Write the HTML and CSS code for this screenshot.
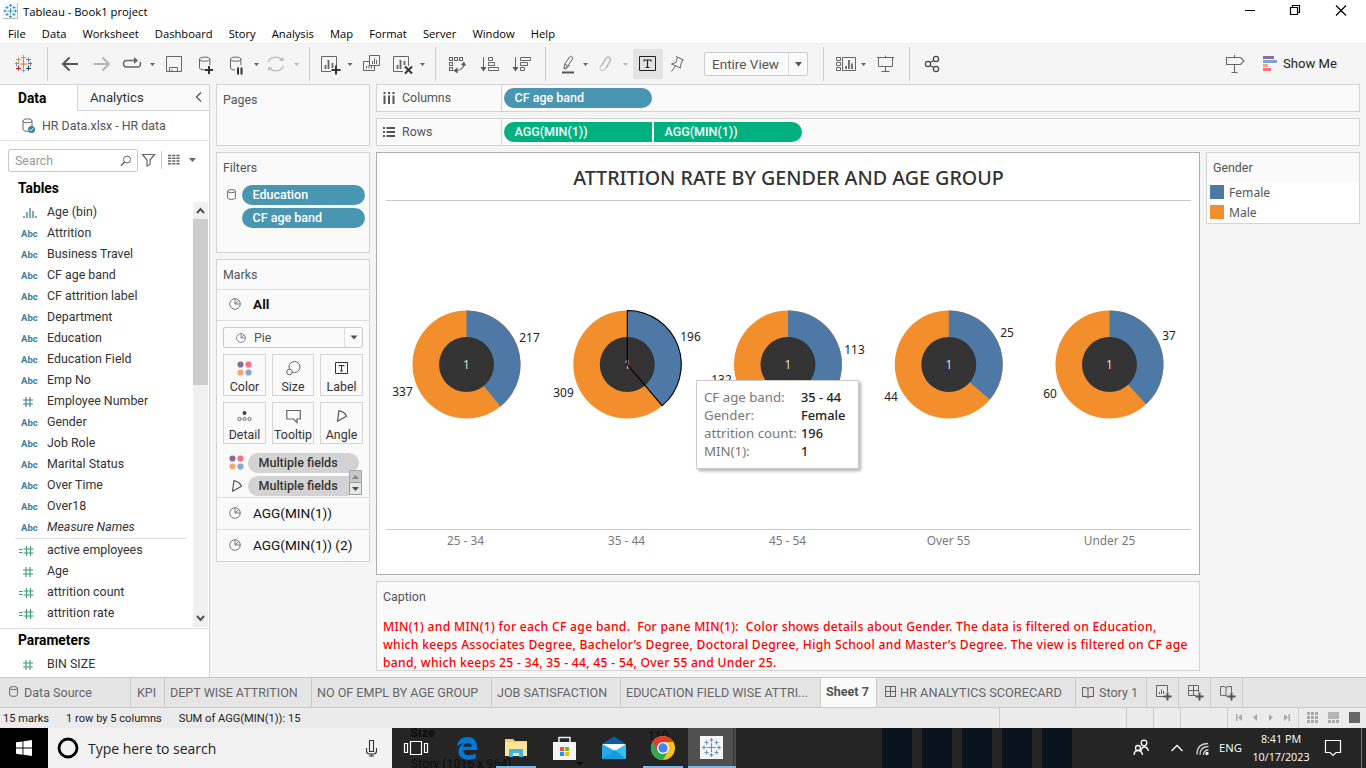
FILE: index.html
```
<!DOCTYPE html>
<html lang="en">
<head>
<meta charset="utf-8">
<title>Tableau - Book1 project</title>
<link rel="stylesheet" href="styles.css">
</head>
<body>
<svg class="defs" width="0" height="0">
  <defs>
    <symbol id="pie" viewBox="0 0 12 12"><circle cx="6" cy="6" r="5.3" fill="none" stroke="#777"/><path d="M6 .8V6L9.8 2.4M6 6h5.2" fill="none" stroke="#777"/></symbol>
    <symbol id="hash" viewBox="0 0 10 10"><path d="M3 0v10M7 0v10M0 3h10M0 7h10" fill="none" stroke="currentColor" stroke-width="1.1"/></symbol>
    <symbol id="calc" viewBox="0 0 15 10"><path d="M7.500 0v10M11.500 0v10M4.500 3h10M4.500 7h10M0 3.500h3.500M0 6.500h3.500" fill="none" stroke="currentColor" stroke-width="1.1"/></symbol>
    <symbol id="dots" viewBox="0 0 15 15"><circle cx="3.500" cy="3.500" r="3.100" fill="#876d99"/><circle cx="11.500" cy="3.500" r="3.100" fill="#fa7183"/><circle cx="3.500" cy="11.500" r="3.100" fill="#f3a776"/><circle cx="11.500" cy="11.500" r="3.100" fill="#86a7cf"/></symbol>
    <symbol id="angle" viewBox="0 0 12 12"><path d="M1.500 11.200 3 .7q6 1.300 7.500 5.600z" fill="none" stroke="#555" stroke-width="1.200" stroke-linejoin="round"/></symbol>
    <symbol id="cyl" viewBox="0 0 9 11"><path d="M.6 2.200v6.600q0 1.600 3.900 1.600t3.900-1.600V2.200Q8.400.6 4.500.6T.6 2.200Q.6 3.600 4.500 3.600T8.400 2.200" fill="none" stroke="#666"/></symbol>
    <symbol id="grid" viewBox="0 0 11 11"><path d="M.5.5h10v10H.5zM5.500.5v10M.5 5.500h10" fill="none" stroke="#666" stroke-width="1.100"/></symbol>
    <symbol id="book" viewBox="0 0 12 12"><path d="M.6 1.500h2.500Q5.500 1.500 6 2.800q.5-1.300 2.900-1.300h2.500v9h-3L6 11.400l-2.400-.9h-3zM6 2.800v8.500" fill="none" stroke="#666" stroke-width="1.100"/></symbol>
  </defs>
</svg>

<header class="titlebar">
  <svg class="app-icon" width="15" height="16" viewBox="0 0 15 16"><path d="M0 0h15v16H0z" fill="#f3f8fb"/><path d="M14.500 0v15.500H0" fill="none" stroke="#bbb"/><path d="M7.500 5v6M4.500 8h6M7.500 1v3M6 2.500h3M7.500 12v3M6 13.500h3M2 6.500v3M.5 8h3M12.500 6.500v3M11 8h3M4 3v3M2.500 4.500h3M11 3v3M9.500 4.500h3M4 10v3M2.500 11.500h3M11 10v3M9.500 11.500h3" stroke="#3d8cc0" stroke-width=".9"/></svg>
  <span class="window-name">Tableau - Book1 project</span>
  <svg width="116" height="22" viewBox="1240 0 116 22" fill="none" stroke="#000" stroke-width="1.200"><path d="M1245 10.500h10M1290.500 7.500h7v7h-7zM1292.500 7.500v-2h7v7h-2M1336 5.500l10 10M1346 5.500l-10 10"/></svg>
</header>
<nav class="menu"><span>File</span><span>Data</span><span>Worksheet</span><span>Dashboard</span><span>Story</span><span>Analysis</span><span>Map</span><span>Format</span><span>Server</span><span>Window</span><span>Help</span></nav>

<div class="toolbar">
  <svg width="56" height="41" viewBox="0 43 56 41"><path d="M23.500 60v8M19.500 64h8" stroke="#e8762c" stroke-width="1.200"/><path d="M23.500 55v5M21 57.500h5" stroke="#7aa6b8"/><path d="M23.500 68.500v4M21.500 70.500h4" stroke="#8a9bc0"/><path d="M15 63.500h4M16.500 62v4" stroke="#6f9ac0"/><path d="M28 63.500h4M30.500 62v4" stroke="#7d6fae"/><path d="M18.500 57.500v5M16 59.500h5" stroke="#eb912c"/><path d="M28.500 57.500v5M26 59.500h5" stroke="#59879b"/><path d="M18.500 65.500v5M16 68.500h5" stroke="#c72035" stroke-width="1.200"/><path d="M28.500 65.500v5M26 68.500h5" stroke="#1f457e" stroke-width="1.200"/><path d="M47.500 47v34" stroke="#ccc"/></svg>
  <svg width="30" height="41" viewBox="56 43 30 41"><path d="M78 64H63M69.500 57.500 63 64l6.500 6.500" class="arrow"/></svg>
  <svg width="32" height="41" viewBox="86 43 32 41"><path d="M94 64h15M102.500 57.500 109 64l-6.500 6.500" class="arrow faint"/></svg>
  <svg width="42" height="41" viewBox="118 43 42 41"><path d="M135 60.500h-8q-3.500 0-3.500 3.200t3.500 3.300h10q3.500 0 3.500-3.300 0-1-.6-1.700" class="ic" stroke-width="1.500"/><path d="M134 57l4 3.500-4 3.500z" fill="#666"/><path d="M150 63h5l-2.500 3z" fill="#666"/></svg>
  <svg width="30" height="41" viewBox="160 43 30 41"><path d="M166.500 56.500h15v15h-15zM169.500 71.500v-4h8v4M172 71.500v-2" class="ic"/></svg>
  <svg width="34" height="41" viewBox="190 43 34 41"><path d="M205 70q-5.500 0-5.500-2V59q0-2 5.200-2t5.200 2v6M199.500 59q0 2.200 5.200 2.200t5.200-2.200" class="ic"/><path d="M209 66v8M205 70h8" stroke="#333" stroke-width="2"/></svg>
  <svg width="40" height="41" viewBox="224 43 40 41"><path d="M235 70q-4.500 0-4.500-2V59q0-2 5.200-2t5.200 2v6M230.500 59q0 2.200 5.200 2.200t5.200-2.200" class="ic"/><path d="M238 67.500v7M241.500 67.500v7" stroke="#333" stroke-width="2"/><path d="M254 63h5l-2.500 3z" fill="#666"/></svg>
  <svg width="45" height="41" viewBox="264 43 45 41"><path d="M268 62a8 7 0 0 1 14-2M283.500 66a8 7 0 0 1-14 2" fill="none" stroke="#bbb" stroke-width="1.300"/><path d="M279 61h4.500v-4zM272.500 67H268v4z" fill="#bbb"/><path d="M294 63h5l-2.500 3z" fill="#bbb"/></svg>
  <svg width="48" height="41" viewBox="309 43 48 41"><path d="M309.500 47v34" stroke="#ccc"/><path d="M331 71.500h-9.500v-15h15V66" class="ic"/><path d="M325.500 65v4M328.500 60v9M332.500 63v5" class="bars"/><path d="M336 65.500v9M331.500 70h9" stroke="#333" stroke-width="2"/><path d="M347.500 63h5l-2.500 3z" fill="#666"/></svg>
  <svg width="30" height="41" viewBox="357 43 30 41"><path d="M369.500 55.500h10v10h-10zM369.500 61.500h-6v9h11v-5" class="ic"/><path d="M372.500 61v3M374.500 58.500v5.500M376.500 60v4M366.500 66v2.500M369 65v3.500M371.500 66v2.500" stroke="#666" stroke-width="1"/></svg>
  <svg width="48" height="41" viewBox="387 43 48 41"><path d="M403 71.500h-9.500v-15h15V66" class="ic"/><path d="M397.500 65v4M400.500 60v9M404.500 61v4" class="bars"/><path d="M405 66.500l7 7M412 66.500l-7 7" stroke="#333" stroke-width="2"/><path d="M420 63h5l-2.500 3z" fill="#666"/></svg>
  <svg width="39" height="41" viewBox="435 43 39 41"><path d="M435.500 47v34" stroke="#ccc"/><path d="M449.500 57.500h3v3h-3zM454.500 57.500h3v3h-3zM459.500 57.500h3v3h-3zM449.500 62.500h3v3h-3zM449.500 67.500h3v3h-3zM464 64q-.5 6-8 6.500" class="ic" stroke-width="1.100"/><path d="M461 65l3-3.500 2 4.500zM457.500 67.500v6l-4-3z" fill="#555"/></svg>
  <svg width="32" height="41" viewBox="474 43 32 41"><path d="M483.500 57v12M488.500 57.500h4v3h-4zM488.500 62.500h6v3h-6zM488.500 67.500h10v3h-10z" class="ic"/><path d="M480.500 67h6l-3 4.500z" fill="#555"/></svg>
  <svg width="39" height="41" viewBox="506 43 39 41"><path d="M515.500 57v12M520.500 57.500h10v3h-10zM520.500 62.500h7v3h-7zM520.500 67.500h4v3h-4z" class="ic"/><path d="M512.500 67h6l-3 4.500z" fill="#555"/></svg>
  <svg width="48" height="41" viewBox="545 43 48 41"><path d="M545.500 47v34" stroke="#ccc"/><path d="M564 69l.8-5 4.700-7q1-1.300 2.300-.3t.7 2.300l-4.700 7zM564.800 64l3 2M569.500 65l-4 4.500" class="ic"/><path d="M562 72.500h12" stroke="#555" stroke-width="2"/><path d="M583 63h5l-2.500 3z" fill="#666"/></svg>
  <svg width="40" height="41" viewBox="593 43 40 41"><path d="M602 66l4-7q1.300-2 3-1t.7 3l-5 8.500q-1.500 2-3.500.8t-1-3.300l5-8.500q2-3 4.500-1.500t.7 4.500l-4 7" class="ic pale"/><path d="M623 63h5l-2.500 3z" fill="#bbb"/></svg>
  <svg width="30" height="41" viewBox="633 43 30 41"><path d="M633 49h30v30h-30z" fill="#e3e3e3"/><path d="M639.500 56.500h16v14h-16z" fill="none" stroke="#222"/><path d="M644 61.500v-1.500h7v1.500M647.500 60v7.500M645.500 67.500h4" fill="none" stroke="#222" stroke-width="1.200"/></svg>
  <svg width="41" height="41" viewBox="663 43 41 41"><path d="M676 56.500l7.500 3.500M677.500 57l-1.500 5.500-4.500 1.500 9 4 .5-4.500 2-4M675.500 66l-4 5.500" class="ic"/></svg>
  <div class="fit"><span>Entire View</span><svg width="19" height="22"><path d="M6 9h7l-3.500 4.500z" fill="#555"/></svg></div>
  <svg width="62" height="41" viewBox="808 43 62 41"><path d="M823.500 47v34" stroke="#ccc"/><path d="M836.500 57.500h4v3h-4zM836.500 62.500h4v3h-4zM836.500 67.500h4v3h-4zM842.500 57.500h13v13h-13z" class="ic"/><path d="M846 66v3M849 60v9M852 63.500v5.500" class="bars"/><path d="M861 63h5l-2.500 3z" fill="#666"/></svg>
  <svg width="39" height="41" viewBox="870 43 39 41"><path d="M877 57.500h17M878.500 58v8.500h14V58M885.500 55.500v2M885.500 66.500v5M881.500 71.500h8" class="ic"/></svg>
  <svg width="36" height="41" viewBox="909 43 36 41"><path d="M909.500 47v34" stroke="#ccc"/><g class="ic dark"><circle cx="928" cy="64" r="2.600"/><circle cx="936" cy="59" r="2.600"/><circle cx="936" cy="69" r="2.600"/><path d="M930.200 62.500l3.500-2M930.200 65.500l3.500 2"/></g></svg>
  <svg class="push" width="30" height="41" viewBox="1221 43 30 41"><path d="M1234.500 55v2.500M1226.500 57.500h14l3.500 3.500-3.500 3.500h-14zM1234.500 64.500v8M1231.500 72.500h6" class="ic" stroke-width="1.100"/></svg>
  <svg width="32" height="41" viewBox="1251 43 32 41"><path d="M1263 56h11v3h-11z" fill="#8a6f9e"/><path d="M1263 60h14v3h-14z" fill="#7fa3cf"/><path d="M1263 64h5v3h-5z" fill="#f3a776"/><path d="M1263 68h8v3h-8z" fill="#fa6e80"/></svg>
  <span class="show-me">Show Me</span>
</div>

<main class="workspace">
  <aside class="data-pane">
    <div class="pane-tabs"><b>Data</b><span>Analytics</span><svg width="20" height="26"><path d="M12 7.500 7.500 12 12 16.500" fill="none" stroke="#555" stroke-width="1.300"/></svg></div>
    <div class="source"><svg width="15" height="16" fill="none"><path d="M6 13.500q-5-.2-5-2.300V2.800Q1 .8 5.500.8T10 2.800V8M1 2.800q0 2 4.500 2t4.500-2" stroke="#666"/><circle cx="9.500" cy="11.500" r="3.600" fill="#3b82a4"/><path d="M7.700 11.500l1.300 1.300 2.300-2.600" stroke="#fff"/></svg>HR Data.xlsx - HR data</div>
    <div class="search-row">
      <div class="search">Search<svg width="12" height="12"><circle cx="7" cy="4.500" r="3.500" class="ic"/><path d="M4.500 7 1 10.800" class="ic" stroke-width="1.500"/></svg></div>
      <svg width="70" height="24" viewBox="138 148 70 24"><path d="M142.500 154.500h12l-4.500 5.500v4.500l-3 1.500v-6z" class="ic" stroke-width="1.200"/><path d="M161.500 151v18" stroke="#ccc"/><path d="M168 155.500h12M168 158.300h12M168 161h12M168 163.700h12" stroke="#666" stroke-width="1.500" stroke-dasharray="3.200 1"/><path d="M189 158h7l-3.500 4z" fill="#666"/></svg>
    </div>
    <h3>Tables</h3>
    <div class="field-area">
      <div class="fields">
        <p><i><svg width="14" height="10"><path d="M1 8v2M4 4v6M7 0v10M10 3v7M13 8v2" stroke="#3c7d9c" stroke-width="1.300"/></svg></i>Age (bin)</p>
        <p><i>Abc</i>Attrition</p>
        <p><i>Abc</i>Business Travel</p>
        <p><i>Abc</i>CF age band</p>
        <p><i>Abc</i>CF attrition label</p>
        <p><i>Abc</i>Department</p>
        <p><i>Abc</i>Education</p>
        <p><i>Abc</i>Education Field</p>
        <p><i>Abc</i>Emp No</p>
        <p><i><svg width="10" height="10"><use href="#hash"/></svg></i>Employee Number</p>
        <p><i>Abc</i>Gender</p>
        <p><i>Abc</i>Job Role</p>
        <p><i>Abc</i>Marital Status</p>
        <p><i>Abc</i>Over Time</p>
        <p><i>Abc</i>Over18</p>
        <p><i>Abc</i><em>Measure Names</em></p>
        <hr>
        <p class="measure"><i class="wide"><svg width="15" height="10"><use href="#calc"/></svg></i>active employees</p>
        <p class="measure"><i><svg width="10" height="10"><use href="#hash"/></svg></i>Age</p>
        <p class="measure"><i class="wide"><svg width="15" height="10"><use href="#calc"/></svg></i>attrition count</p>
        <p class="measure"><i class="wide"><svg width="15" height="10"><use href="#calc"/></svg></i>attrition rate</p>
      </div>
      <div class="scrollbar">
        <svg width="15" height="17"><path d="M4 11l3.500-4 3.500 4" fill="none" stroke="#505050" stroke-width="2"/></svg>
        <div class="thumb"></div>
        <svg class="down" width="15" height="17"><path d="M4 6l3.500 4L11 6" fill="none" stroke="#505050" stroke-width="2"/></svg>
      </div>
    </div>
    <div class="parameters"><h3>Parameters</h3><p class="measure"><i><svg width="10" height="10"><use href="#hash"/></svg></i>BIN SIZE</p></div>
  </aside>

  <section class="cards">
    <div class="card pages"><h4>Pages</h4></div>
    <div class="card filters"><h4>Filters</h4>
      <div class="filter"><svg width="9" height="11"><use href="#cyl"/></svg><span class="pill">Education</span></div>
      <div class="filter"><svg width="9" height="11"></svg><span class="pill">CF age band</span></div>
    </div>
    <div class="card marks"><h4>Marks</h4>
      <div class="mark-row all"><svg width="12" height="12"><use href="#pie"/></svg>All</div>
      <div class="mark-type"><svg width="10" height="10"><use href="#pie"/></svg><span>Pie</span><svg class="open" width="18" height="19"><path d="M5.500 7.500h7l-3.500 4z" fill="#555"/></svg></div>
      <div class="mark-buttons">
        <div><svg width="15" height="15"><use href="#dots"/></svg>Color</div>
        <div><svg width="15" height="15"><circle cx="8.500" cy="6" r="5.500" class="ic"/><circle cx="3.500" cy="11" r="2.800" fill="#fafafa" stroke="#666"/></svg>Size</div>
        <div><svg width="15" height="15"><path d="M1.500 1.500h12v11h-12z" fill="none" stroke="#333"/><path d="M5 5.500v-1h5v1M7.500 4.500v5.500M6 10h3" fill="none" stroke="#333"/></svg>Label</div>
        <div><svg width="15" height="15"><circle cx="7.500" cy="4" r="2" fill="#444"/><circle cx="2.500" cy="10" r="1.600" class="ic"/><circle cx="7.500" cy="10" r="1.600" class="ic"/><circle cx="12.500" cy="10" r="1.600" class="ic"/></svg>Detail</div>
        <div><svg width="15" height="15"><path d="M.8 1.500h13.500v8.500h-3.300v3.500L7.500 10H.8z" class="ic" stroke-width="1.200"/></svg>Tooltip</div>
        <div><svg width="12" height="15" viewBox="0 -1 12 15"><use href="#angle" width="12" height="12"/></svg>Angle</div>
      </div>
      <div class="encodings">
        <div class="encoding"><svg width="15" height="15"><use href="#dots"/></svg><span class="pill grey">Multiple fields</span></div>
        <div class="encoding"><svg width="12" height="12"><use href="#angle"/></svg><span class="pill grey cut">Multiple fields</span></div>
        <svg class="spin" width="13" height="25"><path d="M.5.5h12v12H.5z" fill="#c8c8c8" stroke="#aaa"/><path d="M.5 12.500h12v12H.5z" fill="#e8e8e8" stroke="#999"/><path d="M3 9h7L6.500 5z" fill="#888"/><path d="M3 17h7l-3.500 4z" fill="#3f4f74"/></svg>
      </div>
      <div class="mark-row"><svg width="12" height="12"><use href="#pie"/></svg>AGG(MIN(1))</div>
      <div class="mark-row"><svg width="12" height="12"><use href="#pie"/></svg>AGG(MIN(1)) (2)</div>
    </div>
  </section>

  <section class="sheet">
    <div class="shelf"><div class="shelf-name"><svg width="12" height="13"><path d="M1.500 0v2M1.500 3.500V12M6 0v2M6 3.500V12M10.500 0v2M10.500 3.500V12" stroke="#555" stroke-width="2"/></svg>Columns</div><span class="pill wide-pill">CF age band</span></div>
    <div class="shelf"><div class="shelf-name"><svg width="12" height="13"><path d="M0 2h2M3.500 2H12M0 6h2M3.500 6H12M0 10h2M3.500 10H12" stroke="#555" stroke-width="2"/></svg>Rows</div><span class="pill wide-pill green first">AGG(MIN(1))</span><span class="pill wide-pill green last">AGG(MIN(1))</span></div>
    <div class="canvas-row">
      <div class="canvas-col">
        <div class="viz">
          <h1>ATTRITION RATE BY GENDER AND AGE GROUP</h1>
          <svg class="donuts" width="805" height="329" viewBox="386 201 805 329">
            <g transform="translate(466.500 364.500)"><circle r="54" fill="#f28e2b"/><path d="M0 0V-54A54 54 0 0 1 34 42z" fill="#4e79a7"/><circle r="27.500" fill="#333"/><text class="core" y="4.500">1</text></g>
            <g transform="translate(627.300 364.500)"><circle r="54" fill="#f28e2b"/><path d="M0 0V-54A54 54 0 0 1 34.900 41.200z" fill="#4e79a7"/><circle r="27.500" fill="#333"/><text class="core" y="4.500">1</text><path d="M0 0V-54A54 54 0 0 1 34.900 41.200z" fill="none" stroke="#000" stroke-width="1.100"/></g>
            <g transform="translate(788 364.500)"><circle r="54" fill="#f28e2b"/><path d="M0 0V-54A54 54 0 0 1 13 52.400z" fill="#4e79a7"/><circle r="27.500" fill="#333"/><text class="core" y="4.500">1</text></g>
            <g transform="translate(948.800 364.500)"><circle r="54" fill="#f28e2b"/><path d="M0 0V-54A54 54 0 0 1 41.100 35z" fill="#4e79a7"/><circle r="27.500" fill="#333"/><text class="core" y="4.500">1</text></g>
            <g transform="translate(1109.500 364.500)"><circle r="54" fill="#f28e2b"/><path d="M0 0V-54A54 54 0 0 1 36.600 39.700z" fill="#4e79a7"/><circle r="27.500" fill="#333"/><text class="core" y="4.500">1</text></g>
            <g class="counts"><text x="529.500" y="342">217</text><text x="402.500" y="396">337</text><text x="690.500" y="341">196</text><text x="563.500" y="397">309</text><text x="854.500" y="354">113</text><text x="721.500" y="384">132</text><text x="1007" y="337">25</text><text x="891" y="401">44</text><text x="1169" y="340">37</text><text x="1050" y="398">60</text></g>
          </svg>
          <div class="axis"><span>25 - 34</span><span>35 - 44</span><span>45 - 54</span><span>Over 55</span><span>Under 25</span></div>
          <div class="tooltip"><span>CF age band:</span><b>35 - 44</b><span>Gender:</span><b>Female</b><span>attrition count:</span><b>196</b><span>MIN(1):</span><b>1</b></div>
        </div>
        <div class="caption"><h4>Caption</h4><p>MIN(1) and MIN(1) for each CF age band.&nbsp; For pane MIN(1):&nbsp; Color shows details about Gender. The data is filtered on Education,<br>which keeps Associates Degree, Bachelor’s Degree, Doctoral Degree, High School and Master’s Degree. The view is filtered on CF age<br>band, which keeps 25 - 34, 35 - 44, 45 - 54, Over 55 and Under 25.</p></div>
      </div>
      <div class="legend"><h4>Gender</h4><ul><li class="female">Female</li><li class="male">Male</li></ul></div>
    </div>
  </section>
</main>

<div class="tabs">
  <div class="t1"><svg width="9" height="11"><use href="#cyl"/></svg>Data Source</div>
  <div class="t2">KPI</div><div class="t3">DEPT WISE ATTRITION</div><div class="t4">NO OF EMPL BY AGE GROUP</div><div class="t5">JOB SATISFACTION</div><div class="t6">EDUCATION FIELD WISE ATTRI...</div><div class="t7">Sheet 7</div>
  <div class="t8"><svg width="11" height="11"><use href="#grid"/></svg>HR ANALYTICS SCORECARD</div>
  <div class="t9"><svg width="12" height="12"><use href="#book"/></svg>Story 1</div>
  <div class="new"><svg width="16" height="16"><path d="M8 11.500H.5v-11h11V7" class="ic"/><path d="M3.500 7v2M5.500 4.500V9M7.500 6v3" stroke="#666"/><path d="M11.500 7.500v8M7.500 11.500h8" class="plus"/></svg></div>
  <div class="new"><svg width="16" height="16"><path d="M8 10.500H.5V.5h10V7M5.500.5v10M.5 5.500h10" class="ic"/><path d="M11.500 7.500v8M7.500 11.500h8" class="plus"/></svg></div>
  <div class="new"><svg width="16" height="16"><path d="M7 11.500l-1-.6-2-.5H.5V1.500H3q2.500 0 3 1.300.5-1.300 3-1.300h2.500V7M6 2.800V11" class="ic"/><path d="M11.500 7.500v8M7.500 11.500h8" class="plus"/></svg></div>
</div>
<div class="status">
  <span>15 marks</span><span>1 row by 5 columns</span><span>SUM of AGG(MIN(1)): 15</span>
  <svg width="367" height="20" viewBox="999 708 367 20"><path d="M999.500 708v20M1126.500 708v20M1153.500 708v20M1180.500 708v20M1227.500 708v20M1298.500 708v20" stroke="#ccc"/><path d="M1236 714h1.500v7h-1.500zM1242 714v7l-4-3.500zM1257 714v7l-4-3.500zM1269 714v7l4-3.500zM1284 714v7l4-3.500zM1288.500 714h1.500v7h-1.500z" fill="#aaa"/><path d="M1307 713.500h11M1307 717.500h11M1307 721.500h11" stroke="#aaa" stroke-width="3" stroke-dasharray="3 1"/><path d="M1328 712h11v7h-11z" fill="#b5b5b5"/><path d="M1328 721.500h11" stroke="#aaa" stroke-width="3" stroke-dasharray="3 1"/><path d="M1349 712h11v11h-11z" fill="#666"/></svg>
</div>

<footer class="taskbar">
  <div class="start"><svg width="16" height="16"><path d="M0 2.300 6.500 1.400V7.600H0zM7.400 1.200 16 0v7.600H7.400zM0 8.500h6.500v6.200L0 13.800zM7.400 8.500H16V16l-8.600-1.200z" fill="#fff"/></svg></div>
  <div class="cortana"><svg width="22" height="22"><circle cx="11" cy="11" r="9" fill="none" stroke="#000" stroke-width="2.800"/></svg><span>Type here to search</span><svg width="11" height="17"><path d="M3.500.5h4v11h-4zM.5 8v3q0 3 3 3h4q3 0 3-3V8M5.500 14v2.500M3 16h5" fill="none" stroke="#333" stroke-width="1.100"/></svg></div>
  <svg class="apps" width="344" height="40" viewBox="392 728 344 40">
    <g class="ghost"><text x="410" y="737" font-size="13" font-weight="700">Size</text><text x="411" y="768" font-size="12.300">Story (1016 x 964)</text><text x="648" y="740" font-size="12">110</text><path d="M576 762h7l-3.500 4z"/></g>
    <path d="M688 728h45v40h-45z" fill="#505050"/><path d="M733.500 728v40" stroke="#333"/><path d="M735 728v40" stroke="#4c4c4c" stroke-width="2"/>
    <path d="M496 766h40v2h-40zM643 766h40v2h-40zM688 766h48v2h-48z" fill="#76b9ed"/>
    <path d="M410.500 741.500h11v13h-11zM407.500 743.500h-3v9h3zM424.500 743.500h3v9h-3z" fill="none" stroke="#fff" stroke-width="1.200"/>
    <path d="M457 746.500C458 740 462 737 467.500 737c6 0 9.500 4 9.500 10v3h-14c.3 4 3 5.300 6.300 5.300 2.500 0 4.700-.6 6.500-1.700v4.300c-2 1.200-4.500 1.800-7.500 1.800-6.300 0-9.800-3.700-9.800-8.700 0-3.500 2-6 5-7.500-2.500.3-5 1.300-6.500 3zM463.200 746.700h8.600c0-2.400-1.400-3.700-4-3.700-2.500 0-4 1.300-4.600 3.700z" fill="#0078d7" fill-rule="evenodd"/>
    <path d="M505 739h8l2 2h12v15h-22z" fill="#f5ce62"/><path d="M505 742h22v14h-22z" fill="#ffe594"/><path d="M509 757v-8h14v8h-4v-4h-6v4z" fill="#42b3e5"/>
    <path d="M559 743v-5.500h11v5.500" fill="none" stroke="#eee" stroke-width="1.500"/><path d="M553 742h23v18h-23z" fill="#f4f4f4"/><path d="M560 747h4v4h-4z" fill="#f25022"/><path d="M565 747h4v4h-4z" fill="#7fba00"/><path d="M560 752h4v4h-4z" fill="#00a4ef"/><path d="M565 752h4v4h-4z" fill="#ffb900"/>
    <path d="M602 744l12-7.500 12 7.500z" fill="#0a5ca8"/><path d="M603 744h22v10h-22z" fill="#fff"/><path d="M602 744l15 8-15 7z" fill="#28a8ea"/><path d="M626 744v15h-24z" fill="#35c0f2"/><path d="M602 759l13-9 11 9z" fill="#159bdc"/>
    <g transform="translate(663 748)"><circle r="12" fill="#fbc116"/><path d="M-10.400-6A12 12 0 0 0 0 12L5.200 3 0 0z" fill="#2da94f"/><path d="M-10.400-6A12 12 0 0 1 10.400-6H0L-5.200 3z" fill="#e33b2e"/><circle r="6" fill="#fff"/><circle r="4.700" fill="#4285f4"/></g>
    <path d="M700 736h23v23h-23z" fill="#f3f5f7"/><path d="M711.500 743v9M707 747.500h9M711.500 738v4M709.500 740h4M711.500 753v4M709.500 755h4M704 745.500v4M702 747.500h4M719 745.500v4M717 747.500h4M706.500 740.500v4M704.500 742.500h4M716.500 740.500v4M714.500 742.500h4M706.500 750.500v4M704.500 752.500h4M716.500 750.500v4M714.500 752.500h4" stroke="#5d94b8" stroke-width="1.100"/>
  </svg>
  <svg class="wallpaper" width="190" height="40" viewBox="882 728 190 40"><path d="M882 728h30v40h-30zM922 728h30v40h-30zM962 728h30v40h-30zM1002 728h30v40h-30zM1042 728h30v40h-30z" fill="#0a121b"/></svg>
  <svg class="tray" width="90" height="40" viewBox="1129 728 90 40" fill="none" stroke="#fff" stroke-width="1.300"><circle cx="1144" cy="743" r="2.800"/><path d="M1141 751q.5-4 3.500-4t4 4"/><circle cx="1138" cy="748" r="2.500"/><path d="M1134 755q.3-4.500 4-4.500t4.500 4.500M1171.500 751l5.500-5.500 5.500 5.500"/><path d="M1197 754.500q0-11 11-11M1200 755q0-8.500 8.500-8.500M1203.500 755q0-5 5-5" stroke="#ccc"/><circle cx="1207" cy="753.500" r="1" fill="#fff"/></svg>
  <span class="lang">ENG</span>
  <div class="clock"><span>8:41 PM</span><span>10/17/2023</span></div>
  <svg class="notify" width="42" height="40" viewBox="1320 728 42 40"><path d="M1325.500 740.500h15v12h-4.500l-3 3-3-3h-4.500z" fill="none" stroke="#fff" stroke-width="1.200"/><path d="M1361.500 728v40" stroke="#777"/></svg>
</footer>
</body>
</html>
```
FILE: styles.css
```
* { box-sizing: border-box; margin: 0; padding: 0; }
body { width: 1366px; height: 768px; overflow: hidden; display: flex; flex-direction: column; background: #f5f5f5; font: 12.400px/16px Roboto, "Liberation Sans", sans-serif; color: #333; white-space: nowrap; }
svg { display: block; flex: none; }
.defs { position: absolute; }
.ic { fill: none; stroke: #666; }
.pale { stroke: #bbb; }
.dark { stroke: #444; stroke-width: 1.200; }
.bars { stroke: #666; stroke-width: 1.800; }
.plus { stroke: #555; stroke-width: 2; }
.arrow { fill: none; stroke: #555; stroke-width: 2; }
.faint { stroke: #b5b5b5; }

.titlebar { height: 22px; background: #fff; display: flex; align-items: center; padding: 0 10px 0 3px; font: 11.300px/22px "Open Sans", sans-serif; color: #000; }
.window-name { margin: 1px 0 0 5px; flex: 1; }
.titlebar svg { align-self: flex-start; }
.titlebar .app-icon { margin-top: 3px; }
.menu { height: 21px; background: #fff; display: flex; gap: 16.100px; padding-left: 8px; font: 11.200px/23px "Open Sans", sans-serif; color: #000; }
.toolbar { height: 41px; box-shadow: inset 0 1px #eee; display: flex; align-items: center; padding-right: 29px; }
.fit { width: 104px; height: 24px; border: 1px solid #ccc; border-radius: 2px; display: flex; line-height: 22px; font-size: 13.500px; color: #555; background: #fafafa; }
.fit span { flex: 1; padding-left: 7px; }
.fit svg { border-left: 1px solid #ddd; }
.push { margin-left: auto; }
.show-me { font-size: 13.100px; color: #222; }

.workspace { height: 593px; display: flex; gap: 6px; padding-right: 6px; }
.data-pane { width: 210px; background: #fff; border-top: 1px solid #d4d4d4; border-right: 1px solid #d4d4d4; }
.pane-tabs { height: 26px; display: flex; font-size: 13.200px; line-height: 26px; }
.pane-tabs b { width: 77px; padding-left: 18px; color: #000; font-size: 13.800px; }
.pane-tabs span { flex: 1; padding-left: 12px; border-left: 1px solid #d4d4d4; border-bottom: 1px solid #d4d4d4; background: #fafafa; }
.pane-tabs svg { border-bottom: 1px solid #d4d4d4; background: #fafafa; }
.source { height: 30px; display: flex; align-items: center; gap: 5px; padding-left: 22px; border-bottom: 1px solid #e3e3e3; color: #555; }
.source svg { margin-top: 1px; }
.search-row { display: flex; padding: 8px 0 0 8px; height: 32px; }
.search { width: 130px; height: 23px; border: 1px solid #c8c8c8; border-radius: 2px; display: flex; align-items: center; justify-content: space-between; padding: 0 5px 0 6px; color: #999; }
.search-row > svg { margin-top: -1px; }
h3 { font-size: 13.800px; line-height: 16px; font-weight: 700; color: #000; padding-left: 18px; }
.data-pane > h3 { margin-top: 7px; }
.field-area { margin-top: 6px; height: 427px; display: flex; justify-content: space-between; border-bottom: 1px solid #ddd; }
.fields { width: 193px; margin-top: -1px; }
.data-pane p { height: 21px; line-height: 21px; padding-left: 16px; display: flex; align-items: center; color: #333; }
.data-pane p i { width: 31px; padding: 2px 0 0 5px; font: 700 9.500px/18px Roboto, sans-serif; color: #3c7d9c; }
.data-pane p i svg { margin-left: 2px; }
.data-pane p i.wide svg { margin-left: -2px; }
.data-pane p.measure i { color: #3a9c72; }
.fields hr { border: 0; border-top: 1px solid #ddd; margin: 1px 7px 0 15px; }
.scrollbar { width: 15px; background: #f0f0f0; display: flex; flex-direction: column; height: 425px; margin-right: 1px; }
.thumb { height: 166px; background: #cdcdcd; }
.down { margin-top: auto; }
.parameters { padding-top: 3px; }
.parameters p { margin-top: 5px; }

.cards { width: 154px; display: flex; flex-direction: column; gap: 6px; }
.card, .shelf { border: 1px solid #d4d4d4; background: #fafafa; }
h4 { font-size: 12.400px; font-weight: 400; color: #555; line-height: 16px; padding: 7px 6px 0; }
.pages { height: 62px; }
.filters { height: 101px; }
.marks { height: 303px; }
.pill { display: block; height: 20px; line-height: 20px; border-radius: 10px; background: #4996b2; color: #fff; font-weight: 500; font-size: 12.500px; padding-left: 10.500px; }
.filter { display: flex; align-items: center; gap: 6px; padding: 0 4px 0 10px; height: 23px; }
.filters h4 { padding-bottom: 7px; }
.filter .pill { flex: 1; }
.marks h4 { height: 29px; }
.mark-row { height: 32px; border-top: 1px solid #ddd; display: flex; align-items: center; gap: 12px; padding: 0 0 2px 12px; color: #111; font-size: 13.600px; }
.mark-row.all { border-bottom: 1px solid #ddd; font-weight: 700; }
.mark-type { margin: 6px 6px 0; height: 21px; border: 1px solid #ccc; border-radius: 2px; display: flex; align-items: center; gap: 8px; padding-left: 12px; color: #555; }
.mark-type span { flex: 1; }
.mark-type .open { border-left: 1px solid #ddd; }
.mark-buttons { display: grid; grid-template-columns: 43px 42px 43px; gap: 6px; padding: 6px 6px 0; }
.mark-buttons div { height: 42px; border: 1px solid #d4d4d4; display: flex; flex-direction: column; align-items: center; padding-top: 6px; gap: 3px; }
.encodings { position: relative; height: 53px; padding-top: 7px; overflow: hidden; }
.encoding { height: 23px; display: flex; align-items: center; padding-left: 12px; gap: 4px; }
.encoding svg[width="12"] { margin: 0 1px 0 2px; }
.grey { background: #d3d3d3; color: #333; width: 111px; }
.cut { width: 101px; border-radius: 10px 0 0 10px; }
.spin { position: absolute; right: 7px; bottom: 2px; }

.sheet { flex: 1; display: flex; flex-direction: column; gap: 6px; }
.shelf { height: 28px; display: flex; align-items: center; }
.shelf-name { width: 125px; height: 26px; display: flex; align-items: center; gap: 7px; padding-left: 6px; border-right: 1px solid #d4d4d4; color: #555; }
.wide-pill { width: 148px; margin-left: 2px; }
.green { background: #00b180; }
.first { border-radius: 10px 0 0 10px; }
.last { border-radius: 0 10px 10px 0; }
.canvas-row { display: flex; gap: 6px; align-items: flex-start; }
.canvas-col { width: 824px; display: flex; flex-direction: column; gap: 6px; }
.viz { position: relative; height: 423px; background: #fff; border: 1px solid #aeaeae; padding: 0 8px 0 9px; font-family: "Noto Sans", sans-serif; }
.viz h1 { height: 48px; border-bottom: 1px solid #c8c8c8; text-align: center; font: 500 19.700px/50px "Noto Sans", sans-serif; color: #333; }
.donuts text { font: 11.900px "Noto Sans", sans-serif; fill: #222; text-anchor: middle; }
.donuts text.core { fill: #ddd; }
.axis { display: grid; grid-template-columns: repeat(5, 1fr); margin-top: -1px; border-top: 1px solid #c8c8c8; text-align: center; font-size: 11.850px; line-height: 21px; color: #787878; }
.axis span { padding-right: 2px; }
.tooltip { position: absolute; left: 319px; top: 227px; width: 163px; height: 89px; background: #fff; border: 1px solid #ccc; box-shadow: 2px 2px 3px rgba(0,0,0,.3); display: grid; grid-template-columns: 97px 1fr; align-content: start; padding: 7px; font-size: 13.250px; line-height: 18px; color: #787878; }
.tooltip b { font-weight: 500; font-size: 12.800px; color: #222; }
.caption { height: 90px; border: 1px solid #d4d4d4; background: #fafafa; }
.caption p { padding: 13px 6px 0; font: 500 12.110px/18px "Noto Sans", sans-serif; letter-spacing: .31px; color: #f00; }
.legend { width: 154px; height: 72px; border: 1px solid #d4d4d4; background: #fff; }
.legend h4 { height: 29px; background: #fafafa; }
.legend ul { list-style: none; padding-top: 1px; font: 12.100px/20px "Noto Sans", sans-serif; color: #555; }
.legend li { height: 20px; display: flex; align-items: center; gap: 5px; padding-left: 3px; }
.legend li::before { content: ""; width: 14px; height: 14px; margin-top: -2px; background: #4e79a7; }
.legend li.male::before { background: #f28e2b; }

.tabs { height: 30px; border-top: 1px solid #c8c8c8; background: #e5e5e5; display: flex; font-size: 12.550px; color: #666; }
.tabs div { display: flex; align-items: center; gap: 4px; border-right: 1px solid #c8c8c8; padding-left: 5px; overflow: hidden; }
.tabs .t1 { width: 131px; padding-left: 9px; gap: 6px; }
.tabs .t2 { width: 34px; padding-left: 6px; }
.t3 { width: 147px; }
.t4 { width: 180px; }
.t5 { width: 129px; }
.t6 { width: 200px; }
.tabs .t7 { width: 56px; background: #fafafa; font-weight: 700; color: #555; padding: 0 0 2px 5px; }
.tabs .t8 { width: 199px; padding-left: 8px; font-size: 12.750px; }
.tabs .t9 { width: 71px; gap: 5px; padding-left: 6px; }
.tabs .t8 svg, .tabs .t9 svg, .tabs .t1 svg { margin-top: -2px; }
.tabs .new { width: 32px; padding: 1px 0 0 9px; }
.status { height: 21px; border-top: 1px solid #ccc; background: #ebebeb; display: flex; gap: 17px; padding-left: 3px; font-size: 11.100px; line-height: 21px; color: #222; }
.status svg { margin-left: auto; }

.taskbar { height: 40px; background: #252525; display: flex; color: #fff; font-family: "Open Sans", sans-serif; }
.start { width: 48px; background: #000; display: flex; align-items: center; justify-content: center; }
.cortana { width: 344px; background: #f2f2f2; display: flex; align-items: center; padding: 0 15px 0 9px; color: #222; font-size: 13.950px; }
.cortana span { flex: 1; margin: 2px 0 0 9px; }
.ghost { fill: #0c0c0c; font-family: Roboto, sans-serif; }
.wallpaper { margin-left: 146px; }
.tray { margin-left: 57px; }
.lang { width: 29px; font-size: 11.200px; line-height: 40px; }
.clock { width: 66px; display: flex; flex-direction: column; align-items: center; padding: 2px 0 0; font-size: 10.750px; line-height: 18px; }
.notify { margin-left: 6px; }
```
